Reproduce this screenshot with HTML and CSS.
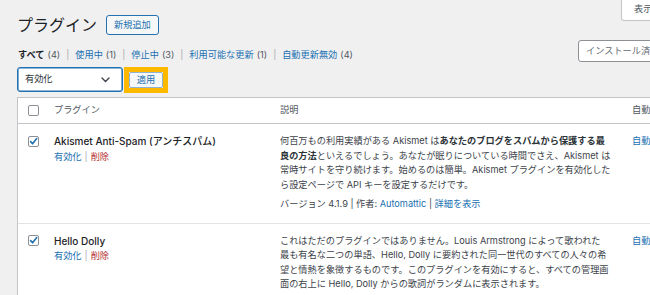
FILE: index.html
```html
<!DOCTYPE html>
<html lang="ja">
<head>
<meta charset="utf-8">
<title>プラグイン</title>
<link rel="stylesheet" href="styles.css">
</head>
<body>
<div class="page">
  <header class="top">
    <div class="title-group">
      <h1 class="title">プラグイン</h1>
      <a class="btn-add" href="#">新規追加</a>
    </div>
    <button class="screen-opt" type="button">表示オプション <span class="caret">▼</span></button>
  </header>

  <div class="filters">
    <ul class="subsubsub">
      <li><a class="current" href="#">すべて</a><span class="count">(4)</span></li>
      <li class="sep">|</li>
      <li><a href="#">使用中</a><span class="count">(1)</span></li>
      <li class="sep">|</li>
      <li><a href="#">停止中</a><span class="count">(3)</span></li>
      <li class="sep">|</li>
      <li><a href="#">利用可能な更新</a><span class="count">(1)</span></li>
      <li class="sep">|</li>
      <li><a href="#">自動更新無効</a><span class="count">(4)</span></li>
    </ul>
    <div class="search"><span class="placeholder">インストール済みプラグインを検索...</span></div>
  </div>

  <div class="bulk">
    <div class="select">
      <span>有効化</span>
      <svg class="chev" width="9" height="6" viewBox="0 0 9 6"><path d="M1 1 L4.5 4.5 L8 1" fill="none" stroke="#3c434a" stroke-width="1.4" stroke-linecap="round" stroke-linejoin="round"/></svg>
    </div>
    <span class="highlight"><button class="btn-apply" type="button">適用</button></span>
  </div>

  <div class="table">
    <div class="row head">
      <div class="cell check"><span class="cb"></span></div>
      <div class="cell name">プラグイン</div>
      <div class="cell desc">説明</div>
      <div class="cell auto">自動更新</div>
    </div>

    <div class="row">
      <div class="cell check"><span class="cb checked"><svg width="11" height="11" viewBox="0 0 11 11"><path d="M2.6 5.6 L4.6 7.8 L8.7 2.6" fill="none" stroke="#2271b1" stroke-width="1.6" stroke-linecap="round" stroke-linejoin="round"/></svg></span></div>
      <div class="cell name">
        <strong class="ptitle">Akismet Anti-Spam (アンチスパム)</strong>
        <div class="actions"><a href="#">有効化</a><span class="bar">|</span><a class="del" href="#">削除</a></div>
      </div>
      <div class="cell desc">
        <p class="text">何百万もの利用実績がある Akismet は<b>あなたのブログをスパムから保護する最<br>良の方法</b>といえるでしょう。あなたが眠りについている時間でさえ、Akismet は<br>常時サイトを守り続けます。始めるのは簡単。Akismet プラグインを有効化した<br>ら設定ページで API キーを設定するだけです。</p>
        <p class="ver">バージョン 4.1.9 | 作者: <a href="#">Automattic</a> | <a href="#">詳細を表示</a></p>
      </div>
      <div class="cell auto"><a href="#">自動更新を有効化</a></div>
    </div>

    <div class="row">
      <div class="cell check"><span class="cb checked"><svg width="11" height="11" viewBox="0 0 11 11"><path d="M2.6 5.6 L4.6 7.8 L8.7 2.6" fill="none" stroke="#2271b1" stroke-width="1.6" stroke-linecap="round" stroke-linejoin="round"/></svg></span></div>
      <div class="cell name">
        <strong class="ptitle">Hello Dolly</strong>
        <div class="actions"><a href="#">有効化</a><span class="bar">|</span><a class="del" href="#">削除</a></div>
      </div>
      <div class="cell desc">
        <p class="text">これはただのプラグインではありません。Louis Armstrong によって歌われた<br>最も有名な二つの単語、Hello, Dolly に要約された同一世代のすべての人々の希<br>望と情熱を象徴するものです。このプラグインを有効にすると、すべての管理画<br>面の右上に Hello, Dolly からの歌詞がランダムに表示されます。</p>
        <p class="ver">バージョン 1.7.2 | 作者: <a href="#">Matt Mullenweg</a> | <a href="#">詳細を表示</a></p>
      </div>
      <div class="cell auto"><a href="#">自動更新を有効化</a></div>
    </div>
  </div>
</div>
</body>
</html>
```

FILE: styles.css
```css
* { box-sizing: border-box; }

html, body {
  margin: 0;
  height: 100%;
}

body {
  background: #f0f0f1;
  color: #3c434a;
  font-family: Inter, "Noto Sans CJK JP", sans-serif;
  font-size: 9.2px;
  line-height: 14.5px;
  overflow: hidden;
}

a { color: #2271b1; text-decoration: none; }

.page {
  width: 780px;
  padding-left: 17px;
}

/* header */
.top {
  display: grid;
  grid-template-columns: 604px auto;
  align-items: start;
  height: 35px;
}

.title-group {
  display: flex;
  align-items: center;
  gap: 9px;
  margin-top: 15px;
}

.title {
  margin: 0;
  font-size: 16px;
  line-height: 20px;
  font-weight: 400;
  color: #1d2327;
}

.btn-add {
  display: flex;
  align-items: center;
  height: 20px;
  padding: 0 7px;
  border: 1px solid #2271b1;
  border-radius: 3px;
  background: #f6f7f7;
  font-size: 9.2px;
  line-height: 1;
}

.screen-opt {
  justify-self: start;
  height: 21px;
  width: 100px;
  padding: 0 0 0 12px;
  border: 1px solid #c3c4c7;
  border-top: none;
  border-radius: 0 0 3px 3px;
  background: #fff;
  color: #50575e;
  font: inherit;
  text-align: left;
}

.caret { font-size: 6px; }

/* filters */
.filters {
  display: grid;
  grid-template-columns: 561px auto;
  align-items: end;
  margin-top: 5px;
}

.subsubsub {
  display: flex;
  align-items: center;
  list-style: none;
  margin: 0;
  padding: 0 0 0 1px;
  height: 14px;
  color: #50575e;
}

.subsubsub .current { color: #1d2327; font-weight: 700; }
.subsubsub .count { margin-left: 3px; color: #50575e; }
.subsubsub .sep { padding: 0 6px; color: #a7aaad; }

.search {
  display: flex;
  align-items: center;
  width: 180px;
  height: 22px;
  padding-left: 7px;
  border: 1px solid #8c8f94;
  border-radius: 3px;
  background: #fff;
  color: #646970;
  white-space: nowrap;
  overflow: hidden;
}

/* bulk actions */
.bulk {
  display: flex;
  align-items: flex-start;
  gap: 1px;
  margin-top: 5px;
  height: 26px;
}

.select {
  display: flex;
  align-items: center;
  justify-content: space-between;
  width: 106px;
  height: 25px;
  padding: 0 12px 0 7px;
  border: 1px solid #2271b1;
  box-shadow: inset 0 0 0 0.6px #2271b1;
  border-radius: 3px;
  background: #fff;
  color: #2c3338;
}

.highlight {
  display: block;
  border: 5px solid #fcb900;
}

.btn-apply {
  display: block;
  width: 34px;
  height: 16px;
  padding: 0;
  border: 1px solid #8fb1d4;
  border-radius: 2px;
  background: #f6f7f7;
  color: #2271b1;
  font: inherit;
  line-height: 14px;
}

/* table */
.table {
  margin-top: 4px;
  width: 760px;
  border: 1px solid #c3c4c7;
  border-right: none;
  background: #fff;
}

.row {
  display: grid;
  grid-template-columns: 36px 226px 352px 1fr;
  padding: 10px 0 11px;
}

.row + .row { border-top: 1px solid #e2e3e5; }

.row.head {
  align-items: center;
  height: 26px;
  padding: 0;
  border-bottom: 1px solid #c3c4c7;
  color: #50575e;
}

.row.head + .row { border-top: none; }

.cell.check { padding-left: 10px; }
.row:not(.head) .cell.check { padding-top: 1.5px; }

.cb {
  display: block;
  width: 11px;
  height: 11px;
  border: 1px solid #8c8f94;
  border-radius: 2px;
  background: #fff;
  position: relative;
}

.cb svg {
  position: absolute;
  left: -1px;
  top: -1px;
}

.ptitle {
  display: block;
  font-size: 10px;
  font-weight: 500;
  color: #1d2327;
  white-space: nowrap;
}

.actions { margin-top: 1px; }
.actions .bar { margin: 0 3px; color: #a7aaad; }
.actions .del { color: #b32d2e; }

.desc p { margin: 0; white-space: nowrap; }
.desc b { font-weight: 600; color: #2c3338; }
.desc .ver { margin-top: 5px; }

.auto { white-space: nowrap; }
```
